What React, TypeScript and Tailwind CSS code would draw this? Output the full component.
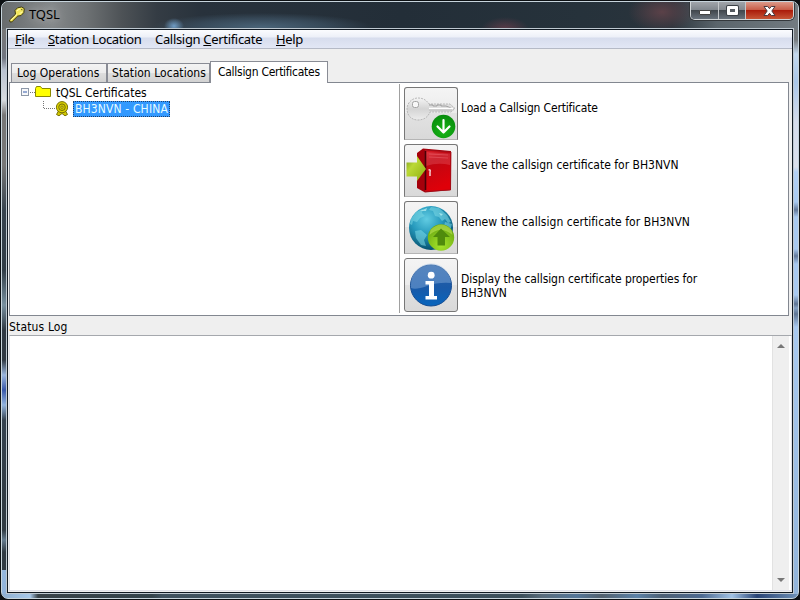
import React from 'react';

const uiFont = "font-['DejaVu_Sans_Condensed','DejaVu_Sans',sans-serif]";

function KeyLogo() {
  return (
    <svg width="18" height="18" viewBox="0 0 18 18" className="shrink-0">
      <path d="M1.5 14 L7.5 8.2 L7 4.5 L9.5 1.8 L13.5 1 L16.3 2.6 L15.8 6.6 L13 9.6 L10 10 L4.2 15.8 L2 16 Z" fill="#f3e75c" stroke="#403c10" strokeWidth="1" />
      <path d="M3 14.2 L9 8.4 M8.8 5 L12 2.7 M11.5 7.7 L14.4 5.8" stroke="#fffbb5" strokeWidth="1" />
      <path d="M13.2 3.2l1.2 1" stroke="#6b6220" strokeWidth="1.1" />
      <path d="M4.2 15.3 L10 9.5" stroke="#8b7e19" strokeWidth="1" />
    </svg>
  );
}

function LoadIcon() {
  return (
    <svg width="52" height="52" viewBox="0 0 52 52">
      <defs>
        <linearGradient id="keyMetal" x1="0" y1="0" x2="0" y2="1"><stop offset="0" stopColor="#f4f4f4" /><stop offset=".5" stopColor="#d4d4d4" /><stop offset="1" stopColor="#ececec" /></linearGradient>
        <radialGradient id="greenDisc" cx=".5" cy=".7" r=".7"><stop offset="0" stopColor="#17b516" /><stop offset="1" stopColor="#078b0c" /></radialGradient>
      </defs>
      <path d="M13 10 C19 10 22 13 24 16 L45 16 L50 20.5 L46 24 H25 C23 29 19 32 13 32 C6 32 2 27 2 21 C2 15 7 10 13 10Z" fill="url(#keyMetal)" stroke="#aaa" strokeWidth=".8" strokeDasharray="2 1" />
      <rect x="7.5" y="13.5" width="6" height="6" rx="2" fill="#f7f7f7" stroke="#a4a4a4" />
      <path d="M24 17h4v1h4v-1h4v1h5l5 2" stroke="#999" fill="none" strokeWidth=".9" />
      <path d="M24 20.5H48" stroke="#fff" strokeWidth="1.4" /><path d="M24 22H47" stroke="#b5b5b5" strokeWidth=".8" />
      <circle cx="38.5" cy="38.5" r="11.8" fill="url(#greenDisc)" />
      <path d="M38.5 32V44.5M32.5 38.5l6 6 6-6" fill="none" stroke="#fff" strokeWidth="2.2" strokeLinecap="round" strokeLinejoin="round" />
    </svg>
  );
}

function SaveIcon() {
  return (
    <svg width="52" height="52" viewBox="0 0 52 52">
      <defs>
        <linearGradient id="door" x1="0" y1="0" x2=".3" y2="1"><stop offset="0" stopColor="#db1d27" /><stop offset=".3" stopColor="#bd0712" /><stop offset="1" stopColor="#df0009" /></linearGradient>
        <linearGradient id="limeArrow" x1="0" y1="0" x2="1" y2="1"><stop offset="0" stopColor="#79991b" /><stop offset=".35" stopColor="#bbd936" /><stop offset="1" stopColor="#8cad0d" /></linearGradient>
      </defs>
      <path d="M12 8 L18 3.5 L46 6 L46 45 L20 47.5 L12 43Z" fill="#a5000b" />
      <path d="M20 5 L46 7 L45.5 45 L20 46.5Z" fill="url(#door)" stroke="#9a101a" strokeWidth=".8" />
      <path d="M21 7 L45 8.5 V20 Q33 17 21 21Z" fill="#f57780" opacity=".28" />
      <path d="M24 9L43 10M24 12L43 13" stroke="#ff8790" strokeWidth=".6" opacity=".55" />
      <path d="M20.5 6V45" stroke="#480006" strokeWidth="1.6" />
      <path d="M1.5 17.5H12V11L21 24L12 36V31.5H1.5Z" fill="url(#limeArrow)" />
      <path d="M23.5 25q2.5 -.5 1.5 2v4" stroke="#f3c6c8" strokeWidth="1.6" fill="none" />
    </svg>
  );
}

function RenewIcon() {
  return (
    <svg width="52" height="52" viewBox="0 0 52 52">
      <defs>
        <radialGradient id="ocean" cx=".4" cy=".3" r=".7"><stop offset="0" stopColor="#61cce2" /><stop offset=".5" stopColor="#2699bc" /><stop offset="1" stopColor="#06516f" /></radialGradient>
        <radialGradient id="greenBall" cx=".5" cy=".8" r=".8"><stop offset="0" stopColor="#a5e52b" /><stop offset="1" stopColor="#66a30f" /></radialGradient>
      </defs>
      <circle cx="26" cy="26" r="22" fill="url(#ocean)" />
      <path d="M6 17L11 10L18 7L17 11L20 14L15 16L12 20L8 19L7 23L5 22ZM26 5L34 6L42 13L46 20L43 21L40 17L37 19L34 15L30 14L28 9L24 8ZM40 20L47 22L45 29L39 24ZM10 29L16 28L22 33L19 38L21 44L16 43L11 36Z" fill="#79d5e4" opacity=".58" />
      <path d="M15 9L22 6L21 9ZM34 11L38 12L36 14Z" fill="#b0ecf0" opacity=".8" />
      <circle cx="36" cy="35.5" r="13.2" fill="url(#greenBall)" />
      <path d="M24.5 33Q35.5 23 47.5 33L46.5 28Q36.5 17 25.5 28Z" fill="#d3f36b" opacity=".45" />
      <path d="M36 26.5L45 35H40V43.5H32.5V35H28Z" fill="#508b0c" />
    </svg>
  );
}

function InfoIcon() {
  return (
    <svg width="52" height="52" viewBox="0 0 52 52">
      <defs><linearGradient id="blueDisc" x1="0" y1="0" x2="0" y2="1"><stop offset="0" stopColor="#2a61a6" /><stop offset=".55" stopColor="#1a5aa8" /><stop offset="1" stopColor="#0765bd" /></linearGradient></defs>
      <circle cx="26" cy="26.5" r="20.5" fill="url(#blueDisc)" stroke="#174d92" />
      <path d="M6 25A20 20 0 0 1 46 24Q33 23 22 27T6 29Z" fill="#99bce3" opacity=".4" />
      <circle cx="26.2" cy="16.2" r="3.4" fill="#fff" />
      <path d="M20.5 22H29V37H32V40.5H20.5V37H24V25.5H20.5Z" fill="#fff" />
    </svg>
  );
}

function Ribbon() {
  return (
    <svg width="14" height="16" viewBox="0 0 14 16" className="shrink-0">
      <path d="M4 9L1.5 13.5L4 14.8L7 12.5L10 14.8L12.5 13.5L10 9Z" fill="#d3c900" stroke="#777006" />
      <circle cx="7" cy="6.2" r="5.6" fill="#dcd300" stroke="#777006" />
      <circle cx="7" cy="6.2" r="3.3" fill="#d3c900" stroke="#777006" />
      <circle cx="7" cy="6.2" r="1.2" fill="#eee72b" stroke="#777006" strokeWidth=".8" />
    </svg>
  );
}

const actions = [
  { icon: <LoadIcon />, lines: [['Load a Callsign Certificate', 'tracking-[-0.17px]']] },
  { icon: <SaveIcon />, lines: [['Save the callsign certificate for BH3NVN', '']] },
  { icon: <RenewIcon />, lines: [['Renew the callsign certificate for BH3NVN', 'tracking-[0.05px]']] },
  { icon: <InfoIcon />, lines: [['Display the callsign certificate properties for', 'tracking-[-0.08px]'], ['BH3NVN', '']] },
];

export default function App() {
  return (
    <div className={`h-[600px] w-[800px] overflow-hidden bg-[#0c1013] pl-px pt-px text-[12px] text-black ${uiFont}`}>
      <div className="relative flex h-[598px] w-[798px] flex-col overflow-hidden rounded-[7px] border border-[#c7d4dc] bg-[linear-gradient(to_bottom,#6d7274_0,#777c80_38px,#c3d8ee_52px,#a9c6e8_80px,#d5dceb_120px,#dbe0ec_165px,#b3d0f4_170px,#a8c9f0_200px,#63799a_208px,#a8c9f0_215px,#a8c9f0_247px,#63799a_254px,#a8c9f0_262px,#a8c9f0_293px,#5f7593_302px,#86a2c4_306px,#5f7593_312px,#a8c9f0_325px,#91b3da_100%)]">
        <div className="absolute inset-y-[28px] left-0 w-[5px] bg-[linear-gradient(to_bottom,#777_0,#707580_28px,#b9c2d0_40px,#d8dce0_70px,#777_85px,#777_135px,#38444f_180px,#303c46_240px,#78909f_275px,#303943_300px,#303943_330px,#9ab6df_345px,#3857a9_360px,#92b3dd_375px,#354250_390px,#303a43_470px,#303a43_500px,#657b8f_510px,#303a43_522px,#303a43_545px,#9dbddc_560px)]" />
        <header className="flex h-[27px] shrink-0 bg-[radial-gradient(ellipse_10px_8px_at_172px_24px,#6f9cc4_0,transparent_100%),radial-gradient(ellipse_110px_14px_at_260px_25px,#4a6478_0,#41586b99_60%,transparent_100%),radial-gradient(ellipse_24px_12px_at_503px_27px,#5a3b48_0,transparent_100%),radial-gradient(ellipse_34px_20px_at_660px_10px,#5b4148_0,transparent_100%),linear-gradient(to_right,#686c6e_0,#84888a_50px,#6d7173_85px,#4d5256_120px,#343c44_155px,#28323c_200px,#232e38_400px,#26323b_580px,#2a343c_670px,#5b656c_715px,#727b81_100%)]">
          <div className="flex h-full w-[688px] pl-[6px] pt-[4px]">
            <KeyLogo />
            <span className="ml-[3px] font-['Noto_Sans',sans-serif] text-[13px] leading-[17px] tracking-[-0.1px] [text-shadow:0_0_8px_#d0d0d0]">TQSL</span>
          </div>
          <div className="flex h-[18px] w-[104px] rounded-b-[5px] border border-t-0 border-[#d1d5d7] shadow-[0_0_0_1px_#34383c]">
            <button className="flex w-[28px] items-center justify-center rounded-bl-[4px] border-r border-[#c5c8cb] bg-[linear-gradient(#a1a5aa_0,#80868d_48%,#41474d_50%,#68717b)]"><span className="mt-[4px] h-[5px] w-[12px] rounded-[1px] border border-[#444] bg-white" /></button>
            <button className="flex w-[27px] items-center justify-center border-r border-[#c5c8cb] bg-[linear-gradient(#a1a5aa_0,#80868d_48%,#41474d_50%,#68717b)]"><span className="flex h-[9px] w-[11px] items-center justify-center rounded-[1px] border-[3px] border-white bg-[#555b61] shadow-[0_0_0_1px_#3c4147]" /></button>
            <button className="flex flex-1 items-center justify-center rounded-br-[4px] bg-[linear-gradient(#dc9a8a_0,#c85e49_45%,#ab1c0b_50%,#c65536)]">
              <svg width="13" height="12" viewBox="0 0 13 12"><path d="M1 1.5H4.7L6.5 3.7L8.3 1.5H12L8.8 6L12 10.5H8.3L6.5 8.3L4.7 10.5H1L4.2 6Z" fill="#fff" stroke="#4a3b40" strokeWidth="1" /></svg>
            </button>
          </div>
        </header>
        <main className="relative ml-[5px] flex h-[564px] w-[786px] shrink-0 flex-col border border-[#111a23] bg-[#efefef] shadow-[0_0_0_1px_#bec8d0]">
          <nav className="flex h-[19px] shrink-0 border-b border-[#b5bac6] bg-[linear-gradient(#fbfcfe_0,#edf0f8_7px,#d7dded_8px,#e2e7f5)] pl-[7px] font-['Noto_Sans',sans-serif] text-[13px] leading-[19px] tracking-[-0.32px]">
            <span className="w-[33px] whitespace-nowrap"><u>F</u>ile</span>
            <span className="w-[107px] whitespace-nowrap"><u>S</u>tation Location</span>
            <span className="w-[121px] whitespace-nowrap">Callsign <u>C</u>ertificate</span>
            <span className="whitespace-nowrap"><u>H</u>elp</span>
          </nav>
          <div className="flex h-[33px] shrink-0 items-end pl-[3px]">
            <div className="h-[19px] w-[96px] whitespace-nowrap border border-b-0 border-[#898c95] bg-[linear-gradient(#f3f3f3_0,#ececec_50%,#dddddd_52%,#d2d2d2)] pl-[5px] leading-[19px] tracking-[0.02px]">Log Operations</div>
            <div className="h-[19px] w-[103px] whitespace-nowrap border border-b-0 border-[#898c95] bg-[linear-gradient(#f3f3f3_0,#ececec_50%,#dddddd_52%,#d2d2d2)] pl-[4px] leading-[19px] tracking-[0.05px]">Station Locations</div>
            <div className="relative z-10 -mb-px h-[22px] w-[118px] whitespace-nowrap border border-b-0 border-[#898c95] bg-white pl-[7px] leading-[20px] tracking-[-0.28px]">Callsign Certificates</div>
          </div>
          <section className="ml-px flex h-[234px] w-[780px] shrink-0 border border-[#828790] bg-white">
            <div className="w-[389px] pl-[10px] pt-[2px]">
              <div className="flex h-[16px] items-center">
                <svg width="35" height="16" viewBox="0 0 35 16" className="shrink-0">
                  <rect x="1.5" y="3.5" width="7" height="7" fill="#f7f8fa" stroke="#8d98a8" /><path d="M3 7H7" stroke="#345bac" />
                  <path d="M10 7.5H15" stroke="#777" strokeDasharray="1 1" />
                  <path d="M15.5 3.5V11.5H30.5V3.5H22L20.5 1.5H16.5Z" fill="#ff0" stroke="#8b8900" />
                </svg>
                <span className="ml-px whitespace-nowrap">tQSL Certificates</span>
              </div>
              <div className="flex h-[16px] items-center">
                <svg width="35" height="16" viewBox="0 0 35 16" className="shrink-0"><path d="M23.5 0V7.5H35" fill="none" stroke="#777" strokeDasharray="1 1" /></svg>
                <Ribbon />
                <span className="ml-[4px] h-[16px] w-[97px] whitespace-nowrap border border-dotted border-[#21406b] bg-[#3399ff] pl-px leading-[14px] tracking-[0.14px] text-[#e4fbff]">BH3NVN - CHINA</span>
              </div>
            </div>
            <div className="mt-px h-[229px] w-px bg-[#a0a0a0]" />
            <div className="flex flex-1 flex-col gap-[3px] pl-[4px] pt-[4px]">
              {actions.map((a, i) => (
                <div key={i} className="flex h-[54px]">
                  <button className={`flex w-[54px] shrink-0 items-start justify-center overflow-hidden border border-[#777] bg-[linear-gradient(#f4f4f4_0,#ececec_49%,#e2e2e2_50%,#d9d9d9)] ${i < 3 ? 'h-[53px] rounded-t-[3px] border-b-[#b5b5b5]' : 'h-[54px] rounded-[3px]'}`}>{a.icon}</button>
                  <div className="ml-[3px] pt-[14px] leading-[14px]">
                    {a.lines.map(([t, c]) => <div key={t} className={`whitespace-nowrap ${c}`}>{t}</div>)}
                  </div>
                </div>
              ))}
            </div>
          </section>
          <div className="h-[19px] shrink-0 pl-px leading-[22px] tracking-[0.15px]">Status Log</div>
          <section className="mb-px ml-px flex flex-1 border border-[#e2e3ea] border-t-[#a5a8ad] bg-white">
            <div className="flex-1" />
            <div className="mr-[2px] flex w-[17px] flex-col items-center justify-between border-l border-[#e2e2e2] bg-[#efefef] py-[8px]">
              <span className="border-x-[4px] border-b-[4px] border-x-transparent border-b-[#777]" />
              <span className="border-x-[4px] border-t-[4px] border-x-transparent border-t-[#777]" />
            </div>
          </section>
        </main>
        <div className="absolute bottom-0 left-0 h-[4px] w-full bg-[linear-gradient(to_right,#8fafd0_0,#a9c9e9_28px,#394349_36px,#34444c_150px,#40525f_160px,#3d505c_520px,#596c7c_540px,#557799_575px,#52616f_600px,#5c82a8_635px,#4d6075_660px,#4d6a91_700px,#a1c2e5_730px,#294475_755px,#6f91b7_100%)]" />
      </div>
    </div>
  );
}
